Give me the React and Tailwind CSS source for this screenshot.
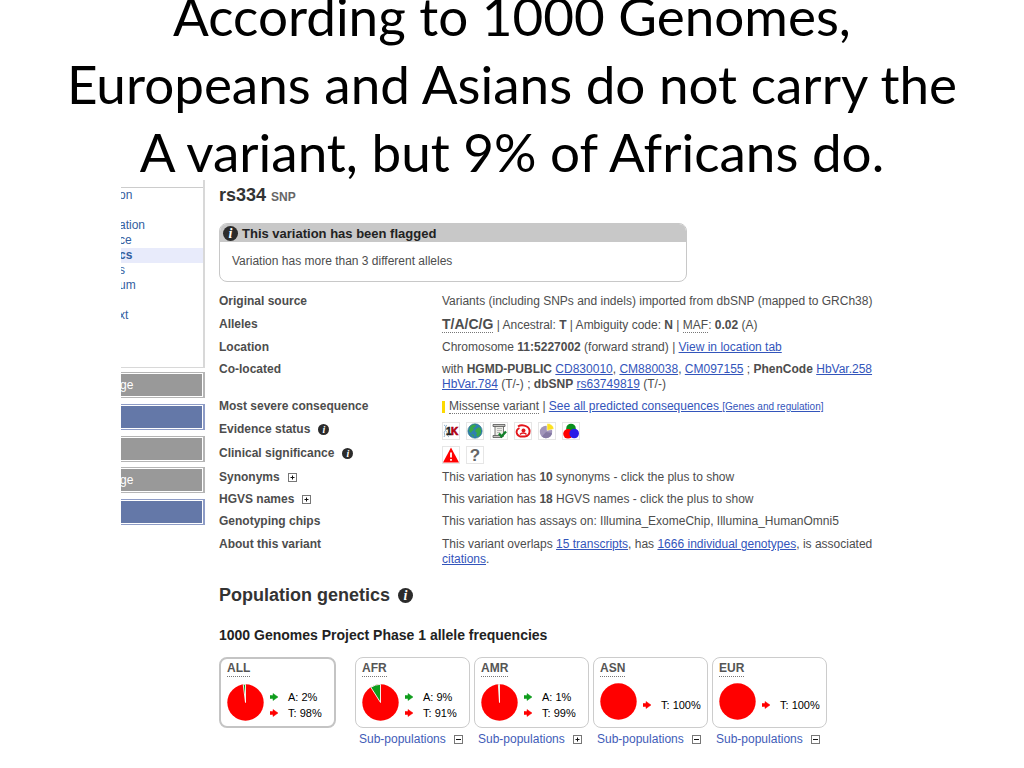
import React from 'react';
import clsx from 'clsx';

const menuItems = ['on', '', 'ation', 'ce', 'cs', 's', 'um', '', 'xt'];

const sideButtons = [
    { label: 'ge', blue: false },
    { label: '', blue: true },
    { label: '', blue: false },
    { label: 'ge', blue: false },
    { label: '', blue: true },
];

const populations = [
    { name: 'ALL', freqs: [['A', 2], ['T', 98]], main: true },
    { name: 'AFR', freqs: [['A', 9], ['T', 91]], open: true },
    { name: 'AMR', freqs: [['A', 1], ['T', 99]], open: false },
    { name: 'ASN', freqs: [['T', 100]], open: true },
    { name: 'EUR', freqs: [['T', 100]], open: true },
];

const alleleColors = { A: '#0f9d1c', T: '#ff0000' };

// --- Small shared pieces ---
const Info = ({ large }) => (
    <span
        className={clsx(
            'inline-flex shrink-0 items-center justify-center rounded-full bg-[#2b2b2b] font-["Liberation_Serif",serif] font-bold italic text-white',
            large ? 'h-[15px] w-[15px] text-[14px] leading-[15px]' : 'h-[11px] w-[11px] text-[10px] leading-[11px]'
        )}
    >
        i
    </span>
);

const Toggle = ({ open }) => (
    <button type="button" className="shrink-0">
        <svg className="h-[9px] w-[9px]" viewBox="0 0 9 9" fill="none" stroke="#444">
            <rect x="0.5" y="0.5" width="8" height="8" stroke="#777" />
            <path d={open ? 'M2 4.5h5' : 'M2.5 4.5h4M4.5 2.5v4'} stroke="#111" />
        </svg>
    </button>
);

const A = ({ children }) => (
    <a href="#" className="text-[#3355bb] underline">{children}</a>
);

const Row = ({ label, extra, className, children }) => (
    <div className={clsx('flex', className)}>
        <dt className="flex w-[223px] shrink-0 items-center gap-2 self-start font-bold">
            {label}
            {extra}
        </dt>
        <dd className="whitespace-nowrap">{children}</dd>
    </div>
);

const IconBox = ({ children }) => (
    <svg className="h-[18px] w-[18px] border border-[#e6e6e6]" viewBox="0 0 16 16">{children}</svg>
);

const EvidenceIcons = () => (
    <div className="flex gap-1.5">
        <IconBox>
            <path d="M1 2c4 2 0 4 2 6s0 4 3 6M4 2C1 4 4 6 2 8s1 4-1 6" fill="none" stroke="#8fb0cc" />
            <text x="3" y="12" fontSize="10" fontWeight="bold" fontFamily="Liberation Sans, sans-serif" fill="#222" stroke="#222" strokeWidth="0.5">1</text>
            <text x="8" y="12" fontSize="10" fontWeight="bold" fontFamily="Liberation Sans, sans-serif" fill="#b00010" stroke="#b00010" strokeWidth="0.7">K</text>
        </IconBox>
        <IconBox>
            <circle cx="8" cy="8" r="7.2" fill="#2f80ae" stroke="#2b7280" strokeWidth="0.6" />
            <path d="M3 4c2-3 5-3 6-2l-1 2-2 1 1 2-2 1-1 2-2-2zM9 6l3-2 2 2v4l-3 4-2-2 1-2-2-2zM4 11l3 1 0 2z" fill="#39a848" />
        </IconBox>
        <IconBox>
            <path d="M4 2.5h8.500v11H4z" fill="#ecece6" stroke="#777" />
            <path d="M2 1.5h12v2H2zM2 12.500h9v2H2z" fill="#c4c4c0" stroke="#555" strokeWidth="0.8" />
            <path d="M6 5.500h5M6 7.500h5M6 9.500h3" stroke="#aaa" strokeWidth="0.8" />
            <path d="M8 10.500l2.500 3 4.500-5" fill="none" stroke="#13802b" strokeWidth="2.400" />
        </IconBox>
        <IconBox>
            <path d="M3 3.500C6 1.500 13 2 14.500 7c0.500 4-2 6-4.500 6.500" fill="none" stroke="#e3151b" strokeWidth="2" />
            <path d="M4.500 5C0 7 1 12 5 13.500h5" fill="none" stroke="#e3151b" strokeWidth="1.800" />
            <circle cx="8.500" cy="7.500" r="2" fill="#e3151b" />
            <path d="M5 11.500c1.500-2 5-2 6.500 0" fill="none" stroke="#e3151b" strokeWidth="1.400" />
        </IconBox>
        <IconBox>
            <circle cx="7" cy="9" r="6.200" fill="#a195ba" />
            <path d="M3 13.500a6 6 0 0 0 10-3.500L7 9z" fill="#8579a3" />
            <path d="M8 7.500V0.500a7 7 0 0 1 7 5.500z" fill="#fce020" stroke="#fff" strokeWidth="0.5" />
        </IconBox>
        <IconBox>
            <circle cx="8" cy="5.500" r="4.800" fill="#0a8f1d" />
            <circle cx="5" cy="10.800" r="4.800" fill="#f00" />
            <circle cx="11.200" cy="10.500" r="4.800" fill="#2a1be8" />
        </IconBox>
    </div>
);

const ClinicalIcons = () => (
    <div className="flex gap-1.5">
        <IconBox>
            <path d="M8 0.500L16 15.500H0z" fill="#f00" />
            <path d="M8 5.500v5M8 12v1.800" stroke="#fff" strokeWidth="1.800" />
        </IconBox>
        <IconBox>
            <text x="8" y="14" fontSize="17" fontWeight="bold" textAnchor="middle" fontFamily="Liberation Sans, sans-serif" fill="#666">?</text>
        </IconBox>
    </div>
);

// The minor allele slice ends at 12 o'clock, the rest of the disc is T
const Pie = ({ freqs }) => {
    const minor = freqs.length > 1 ? freqs[0][1] : 0;
    const angle = (minor / 100) * 2 * Math.PI;
    const x = 18.5 - 18 * Math.sin(angle);
    const y = 18.5 - 18 * Math.cos(angle);
    return (
        <svg className="h-[37px] w-[37px] shrink-0" viewBox="0 0 37 37">
            <circle cx="18.5" cy="18.5" r="18.2" fill="#ff0000" />
            {minor > 0 && (
                <path d={`M18.5 18.5L${x} ${y}A18 18 0 0 1 18.5 0.3z`} fill={alleleColors.A} stroke="#fff" strokeWidth="0.9" />
            )}
        </svg>
    );
};

const PopulationCard = ({ pop }) => (
    <div className={pop.main ? 'mr-[15px] w-[117px]' : 'w-[115px]'}>
        <div
            className={clsx(
                'h-[71px] rounded-lg px-1.5',
                pop.main ? 'border-2 border-[#c4c4c4] pt-0.5' : 'border border-[#ccc] pt-[3px]'
            )}
        >
            <span className="inline-block border-b border-dotted border-[#777] text-xs leading-[15px] font-bold text-[#555]">{pop.name}</span>
            <div className="mt-1.5 flex items-center gap-1.5">
                <Pie freqs={pop.freqs} />
                <ul className="pt-1.5 text-[11px] leading-4 text-black">
                    {pop.freqs.map(([allele, value]) => (
                        <li key={allele} className="flex items-center gap-2.5 whitespace-nowrap">
                            <svg className="h-2 w-2" viewBox="0 0 8 8">
                                <path d="M0 2.500h3V0.500L8 4 3 7.500V5.500H0z" fill={alleleColors[allele]} stroke={alleleColors[allele]} strokeWidth="0.5" />
                            </svg>
                            {allele}: {value}%
                        </li>
                    ))}
                </ul>
            </div>
        </div>
        {!pop.main && (
            <div className="mt-1 flex items-center gap-2 pl-1 text-xs leading-[15px]">
                <a href="#" className="text-[#3f5cb8]">Sub-populations</a>
                <Toggle open={pop.open} />
            </div>
        )}
    </div>
);

function Sidebar() {
    return (
        <aside className="w-[84px] shrink-0 overflow-hidden text-xs">
            <nav className="h-[188px] border-r-2 border-b border-[#d8d8d8] pt-[7px]">
                <ul className="h-full border-t border-[#ccc] leading-[15px]">
                    {menuItems.map((item, i) => (
                        <li key={i} className={clsx('h-[15px]', item === 'cs' && 'bg-[#e8ebfb] font-bold')}>
                            {item && <a href="#" className="-ml-0.5 text-[#33609f]">{item}</a>}
                        </li>
                    ))}
                </ul>
            </nav>
            <div className="mt-1 -ml-px flex h-[153px] flex-col justify-between">
                {sideButtons.map((btn, i) => (
                    <button
                        key={i}
                        type="button"
                        className={clsx(
                            'h-[26px] border-y border-r-2 text-left text-white inset-ring inset-ring-white',
                            btn.blue ? 'border-[#8e9cc6] bg-[#6478a8]' : 'border-[#b5b5b5] bg-[#999]'
                        )}
                    >
                        {btn.label}
                    </button>
                ))}
            </div>
        </aside>
    );
}

export default function App() {
    return (
        <div className="overflow-hidden bg-white font-['Liberation_Sans',Arial,sans-serif]">
            <h1 className="-mt-[18px] text-center font-['Lato',sans-serif] text-[53px] leading-[68px] text-black">
                According to 1000 Genomes,<br />
                Europeans and Asians do not carry the<br />
                A variant, but 9% of Africans do.
            </h1>
            <div className="-mt-1.5 ml-[121px] flex gap-3.5">
                <Sidebar />
                <main className="grow pt-[5px] text-xs leading-[15px] text-[#4d4d4d]">
                    <h2 className="text-lg leading-5 font-bold text-[#333]">
                        rs334 <span className="text-xs text-[#666]">SNP</span>
                    </h2>

                    <section className="mt-[18px] h-[59px] w-[468px] overflow-hidden rounded-lg border border-[#c8c8c8]">
                        <h3 className="flex h-[18px] items-center gap-1 bg-[#c8c8c8] px-[3px] text-[13px] font-bold text-[#222]">
                            <Info large />
                            This variation has been flagged
                        </h3>
                        <p className="px-3 pt-3">Variation has more than 3 different alleles</p>
                    </section>

                    <dl className="mt-3">
                        <Row label="Original source" className="h-[23px]">
                            Variants (including SNPs and indels) imported from dbSNP (mapped to GRCh38)
                        </Row>
                        <Row label="Alleles" className="h-[23px]">
                            <b className="inline-block border-b border-dotted border-[#777] text-sm leading-[15px]">T/A/C/G</b> | Ancestral: <b>T</b> | Ambiguity code: <b>N</b> | <span className="border-b border-dotted border-[#777]">MAF</span>: <b>0.02</b> (A)
                        </Row>
                        <Row label="Location" className="h-[22px]">
                            Chromosome <b>11:5227002</b> (forward strand) | <A>View in location tab</A>
                        </Row>
                        <Row label="Co-located" className="h-[37px]">
                            with <b>HGMD-PUBLIC</b> <A>CD830010</A>, <A>CM880038</A>, <A>CM097155</A> ; <b>PhenCode</b> <A>HbVar.258</A><br />
                            <A>HbVar.784</A> (T/-) ; <b>dbSNP</b> <A>rs63749819</A> (T/-)
                        </Row>
                        <Row label="Most severe consequence" className="h-[23px]">
                            <span className="mr-1 inline-block h-3 w-[3px] bg-[#fcd900] align-middle" />
                            <span className="border-b border-dotted border-[#777]">Missense variant</span> | <A>See all predicted consequences <span className="text-[10px]">[Genes and regulation]</span></A>
                        </Row>
                        <Row label="Evidence status" extra={<Info />} className="h-6">
                            <EvidenceIcons />
                        </Row>
                        <Row label="Clinical significance" extra={<Info />} className="h-6">
                            <ClinicalIcons />
                        </Row>
                        <Row label="Synonyms" extra={<Toggle />} className="h-[22px]">
                            This variation has <b>10</b> synonyms - click the plus to show
                        </Row>
                        <Row label="HGVS names" extra={<Toggle />} className="h-[22px]">
                            This variation has <b>18</b> HGVS names - click the plus to show
                        </Row>
                        <Row label="Genotyping chips" className="h-[23px]">
                            This variation has assays on: Illumina_ExomeChip, Illumina_HumanOmni5
                        </Row>
                        <Row label="About this variant">
                            This variant overlaps <A>15 transcripts</A>, has <A>1666 individual genotypes</A>, is associated<br />
                            <A>citations</A>.
                        </Row>
                    </dl>

                    <h2 className="mt-[18px] flex items-center gap-2 text-lg leading-5 font-bold text-[#333]">
                        Population genetics <Info large />
                    </h2>
                    <h3 className="mt-5 text-sm leading-5 font-bold text-[#222]">
                        1000 Genomes Project Phase 1 allele frequencies
                    </h3>
                    <div className="mt-3 flex gap-1">
                        {populations.map((pop) => (
                            <PopulationCard key={pop.name} pop={pop} />
                        ))}
                    </div>
                </main>
            </div>
        </div>
    );
}
